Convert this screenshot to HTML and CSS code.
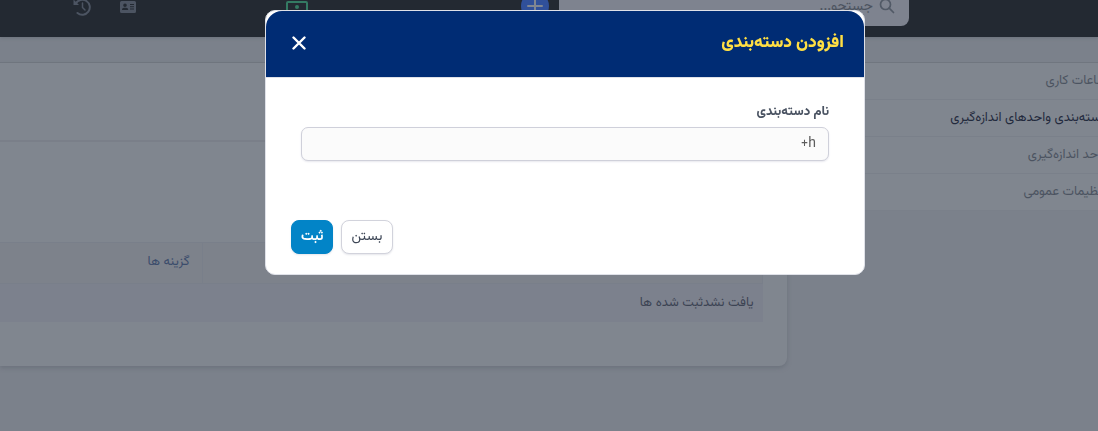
FILE: index.html
```html
<!DOCTYPE html>
<html lang="fa" dir="rtl">
<head>
<meta charset="utf-8">
<meta name="viewport" content="width=device-width, initial-scale=1">
<title>افزودن دسته‌بندی</title>
<link rel="stylesheet" href="styles.css">
</head>
<body>
<header class="navbar">
  <label class="search">
    <svg class="search-icon" viewBox="0 0 16 16" aria-hidden="true"><circle cx="6.5" cy="6.5" r="5" fill="none" stroke="currentColor" stroke-width="1.700"/><path d="M10.200 10.200L14.500 14.500" stroke="currentColor" stroke-width="1.700" stroke-linecap="round"/></svg>
    <input class="search-input" type="search" placeholder="جستجو..." aria-label="جستجو">
  </label>
  <button class="nav-add" type="button" aria-label="افزودن"><svg viewBox="0 0 28 28" width="28" height="28"><path d="M14 7v14M7 14h14" stroke="currentColor" stroke-width="2" stroke-linecap="round"/></svg></button>
  <button class="nav-button nav-cash" type="button" aria-label="پرداخت"><svg viewBox="0 0 22 16" width="22" height="16"><rect x="1" y="1" width="20" height="14" rx="1" fill="none" stroke="currentColor" stroke-width="2"/><circle cx="11" cy="6" r="2" fill="currentColor"/></svg></button>
  <div class="nav-tools">
    <button class="nav-button" type="button" aria-label="کارت"><svg viewBox="0 0 16 12" width="16" height="12"><path fill="currentColor" fill-rule="evenodd" d="M1.500 0h13A1.500 1.500 0 0 1 16 1.500v9a1.500 1.500 0 0 1-1.500 1.500h-13A1.500 1.500 0 0 1 0 10.500v-9A1.500 1.500 0 0 1 1.500 0zM5 2.500a1.800 1.800 0 1 0 0 3.600 1.800 1.800 0 0 0 0-3.600zM2 9h6.200c0-1.600-.9-2.300-2-2.300H4C2.900 6.700 2 7.400 2 9zM10 3v1h4V3zM10 5.300v1h4v-1zM10 7.600v1h4v-1z"/></svg></button>
    <button class="nav-button" type="button" aria-label="تاریخچه"><svg viewBox="0 0 18 18" width="18" height="18"><path d="M2.800 5.500A7.500 7.500 0 1 1 4.500 15" fill="none" stroke="currentColor" stroke-width="2" stroke-linecap="round"/><path d="M.5 1.500v5.500h5.500z" fill="currentColor"/><path d="M9.500 5v4.500l2.500 2.500" fill="none" stroke="currentColor" stroke-width="1.500" stroke-linecap="round"/></svg></button>
  </div>
</header>
<div class="page">
  <nav class="sidebar">
    <a class="side-link" href="#">ساعات کاری</a>
    <a class="side-link side-link-active" href="#">دسته‌بندی واحدهای اندازه‌گیری</a>
    <a class="side-link" href="#">واحد اندازه‌گیری</a>
    <a class="side-link" href="#">تنظیمات عمومی</a>
  </nav>
  <main class="card">
    <div class="card-head"></div>
    <div class="card-body">
      <table class="grid">
        <thead><tr><th class="grid-name"></th><th class="grid-options">گزینه ها</th></tr></thead>
        <tbody><tr><td colspan="2">یافت نشدثبت شده ها</td></tr></tbody>
      </table>
    </div>
  </main>
</div>
<div class="overlay">
  <form class="modal" role="dialog" aria-labelledby="modal-title">
    <div class="modal-head">
      <h1 class="modal-title" id="modal-title">افزودن دسته‌بندی</h1>
      <button class="modal-close" type="button" aria-label="بستن پنجره"><svg viewBox="0 0 14 14" width="14" height="14"><path d="M1.500 1.500l11 11M12.500 1.500l-11 11" stroke="currentColor" stroke-width="2.400" stroke-linecap="round"/></svg></button>
    </div>
    <div class="modal-body">
      <label class="field-label" for="category">نام دسته‌بندی</label>
      <input class="field-input" id="category" type="text" value="h+">
    </div>
    <div class="modal-foot">
      <button class="button" type="button">بستن</button>
      <button class="button button-primary" type="submit">ثبت</button>
    </div>
  </form>
</div>
</body>
</html>
```
FILE: styles.css
```css
* { box-sizing: border-box; }

body {
  margin: 0;
  min-height: 100vh;
  overflow: hidden;
  background: #7b818b;
  color: #3c4454;
  font: 14px/20px Vazirmatn, Vazir, Roboto, "DejaVu Sans", sans-serif;
}

button, input { font: inherit; }
button { padding: 0; border: 0; background: none; cursor: pointer; }
svg { display: block; }

.navbar {
  display: flex;
  align-items: flex-start;
  height: 37px;
  padding-right: 189px;
  overflow: hidden;
  background: #232932;
  box-shadow: 0 1px 3px #6c727c;
}
.search {
  display: flex;
  align-items: center;
  gap: 6px;
  width: 350px;
  height: 40px;
  margin-top: -14px;
  padding: 0 14px;
  border-radius: 8px;
  background: #7e838f;
  color: #515966;
}
.search-icon { width: 16px; height: 16px; }
.search-input {
  flex: 1;
  min-width: 0;
  padding: 2px 0 0;
  border: 0;
  background: none;
  color: inherit;
}
.search-input::placeholder { color: #4c535f; opacity: 1; }
.nav-add {
  margin: -8px 10px 0 0;
  border-radius: 50%;
  background: #30509a;
  color: #818791;
}
.nav-button { color: #4c5462; }
.nav-cash { margin: 1px 213px 0 0; color: #347a63; }
.nav-tools {
  display: flex;
  align-items: center;
  gap: 29px;
  margin: -2px 150px 0 0;
}

.page {
  display: flex;
  align-items: flex-start;
  gap: 25px;
  margin-top: 25px;
  margin-right: -24px;
  border-top: 1px solid #70767f;
}
.sidebar { flex: 0 0 310px; background: #80868f; }
.side-link {
  display: flex;
  align-items: center;
  height: 37px;
  padding-right: 15px;
  border-bottom: 1px solid #7a808a;
  color: #4c5461;
  font-size: 13px;
  text-decoration: none;
  white-space: nowrap;
}
.side-link-active { color: #232a3d; }

.card {
  flex: 1;
  border-radius: 0 0 8px 0;
  background: #80868f;
  box-shadow: 0 2px 4px #6c727c;
}
.card-head { height: 79px; border-bottom: 2px solid #7a7f89; }
.card-body { padding: 100px 24px 44px 0; }
.grid {
  width: 100%;
  border-collapse: collapse;
  table-layout: fixed;
  font-size: 13px;
}
.grid th {
  height: 41px;
  padding: 0 12px 2px;
  border: 1px solid #797f8a;
  background: #7d828b;
  color: #3b4c6b;
  font-weight: 400;
  text-align: right;
}
.grid .grid-options { width: 202px; border-left: 0; }
.grid td { height: 38px; padding: 0 9px; background: #7c818d; }

.overlay {
  position: fixed;
  inset: 0;
  display: flex;
  align-items: flex-start;
  justify-content: center;
  padding: 10px 0 0 32px;
}
.modal {
  width: 600px;
  max-width: 100%;
  border: 1px solid #dfe1e8;
  border-radius: 10px;
  background: #fff;
}
.modal-head {
  display: flex;
  align-items: center;
  justify-content: space-between;
  height: 67px;
  padding: 0 20px 2px 26px;
  border-bottom: 1px solid #dfe1e8;
  border-radius: 16px 16px 0 0;
  background: #002c74;
  color: #fff;
}
.modal-title {
  margin: 0;
  color: #ffdf43;
  font-size: 17px;
  font-weight: 900;
  line-height: 24px;
}
.modal-close { color: #fff; }
.modal-body { padding: 24px 35px 0; }
.field-label {
  display: block;
  margin-bottom: 5px;
  color: #4a5362;
  font-size: 13px;
  font-weight: 800;
}
.field-input {
  display: block;
  width: 100%;
  height: 34px;
  padding: 0 12px;
  border: 1px solid #cfd0da;
  border-radius: 7px;
  background: #fbfbfb;
  box-shadow: 0 1px 2px #e8e8ee;
  color: #5c5c5c;
}
.modal-foot {
  display: flex;
  justify-content: flex-end;
  gap: 8px;
  padding: 59px 25px 20px;
}
.button {
  height: 34px;
  padding: 0 9px;
  border: 1px solid #d2d3dc;
  border-radius: 8px;
  background: #fff;
  box-shadow: 0 1px 2px #e5e6eb;
  color: #3d4656;
}
.button-primary {
  border-color: #0284c7;
  background: #0284c7;
  color: #fff;
  font-weight: 700;
}
```
